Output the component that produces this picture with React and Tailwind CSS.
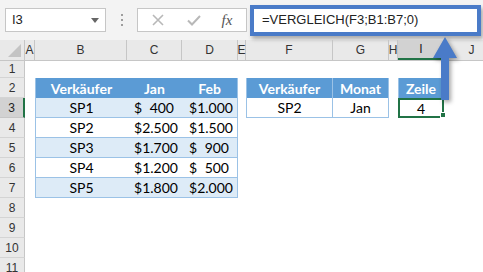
import React from 'react';

const CELL_FONT = { fontFamily: 'Lato, "Liberation Sans", sans-serif' };
const UI_FONT = { fontFamily: '"Liberation Sans", Arial, sans-serif' };

const COLUMNS = [
  { key: 'A', w: 'w-[10px]' },
  { key: 'B', w: 'w-[92px]' },
  { key: 'C', w: 'w-[55px]' },
  { key: 'D', w: 'w-[56px]' },
  { key: 'E', w: 'w-[8px]' },
  { key: 'F', w: 'w-[87px]' },
  { key: 'G', w: 'w-[56px]' },
  { key: 'H', w: 'w-[9px]' },
  { key: 'I', w: 'w-[46px]' },
  { key: 'J', w: 'w-[56px]' },
];

const SALES = [
  { name: 'SP1', jan: '400', feb: '1.000', shade: true },
  { name: 'SP2', jan: '2.500', feb: '1.500', shade: false },
  { name: 'SP3', jan: '1.700', feb: '900', shade: true },
  { name: 'SP4', jan: '1.200', feb: '500', shade: false },
  { name: 'SP5', jan: '1.800', feb: '2.000', shade: true },
];

function Cell({ w, className = '', children }) {
  return <div className={`${w} h-full shrink-0 flex items-center ${className}`}>{children}</div>;
}

function Money({ w, value, className = '' }) {
  return (
    <Cell w={w} className={`justify-between pl-[7px] pr-[8px] ${className}`}>
      <span>$</span>
      <span>{value}</span>
    </Cell>
  );
}

function RowHead({ n, active }) {
  return (
    <div
      className={`w-[25px] h-full shrink-0 flex items-center justify-center border-b text-[12px] ${
        active
          ? 'bg-[#d2d2d2] border-r-2 border-r-[#217346] border-b-[#c6c6c6] text-[#222]'
          : 'bg-[#e9e9e9] border-r border-r-[#c6c6c6] border-b-[#d4d4d4] text-[#333]'
      }`}
      style={UI_FONT}
    >
      {n}
    </div>
  );
}

function SheetRow({ n, h = 'h-[20px]', active, children }) {
  return (
    <div className={`flex ${h}`}>
      <RowHead n={n} active={active} />
      {children}
    </div>
  );
}

function EmptyRow({ n, h }) {
  return <SheetRow n={n} h={h} />;
}

function TopBar() {
  return (
    <div className="h-[40px] flex items-center bg-[#f3f3f3]" style={UI_FONT}>
      <div className="ml-[5px] w-[101px] h-[24px] bg-white border border-[#c6c6c6] flex items-center justify-between pl-[6px] pr-[6px]">
        <span className="text-[13px] text-[#222]">I3</span>
        <svg width="8" height="5" viewBox="0 0 8 5">
          <path d="M0 0 L8 0 L4 5 Z" fill="#666" />
        </svg>
      </div>
      <div className="w-[31px] flex flex-col items-center gap-[3px]">
        <span className="w-[2px] h-[2px] bg-[#9d9d9d]" />
        <span className="w-[2px] h-[2px] bg-[#9d9d9d]" />
        <span className="w-[2px] h-[2px] bg-[#9d9d9d]" />
      </div>
      <div className="w-[110px] h-[24px] bg-white border border-[#c6c6c6] flex items-center">
        <div className="w-[40px] flex justify-center">
          <svg width="12" height="12" viewBox="0 0 12 12">
            <path d="M1 1 L11 11 M11 1 L1 11" stroke="#b8b8b8" strokeWidth="1.6" />
          </svg>
        </div>
        <div className="w-[32px] flex justify-center">
          <svg width="14" height="11" viewBox="0 0 14 11">
            <path d="M1 5.5 L5 9.5 L13 1" stroke="#b8b8b8" strokeWidth="2" fill="none" />
          </svg>
        </div>
        <div className="flex-1 flex justify-center pr-[2px]">
          <span className="italic text-[15px] text-[#555]" style={{ fontFamily: '"Liberation Serif", serif' }}>
            fx
          </span>
        </div>
      </div>
      <div className="ml-[3px] w-[231px] h-[31px] bg-white border-4 border-[#4a7bc8] shadow-[2px_3px_4px_rgba(0,0,0,0.3)] flex items-center pl-[8px]">
        <span className="text-[13px] text-[#222]">=VERGLEICH(F3;B1:B7;0)</span>
      </div>
    </div>
  );
}

function ColumnHeader() {
  return (
    <div className="flex h-[21px] bg-[#e9e9e9] border-b border-[#c6c6c6]" style={UI_FONT}>
      <div className="w-[25px] shrink-0 border-r border-[#c6c6c6] flex items-end justify-end p-[3px]">
        <svg width="13" height="13" viewBox="0 0 13 13">
          <path d="M13 0 L13 13 L0 13 Z" fill="#c4c4c4" />
        </svg>
      </div>
      {COLUMNS.map((c) => (
        <div
          key={c.key}
          className={`${c.w} shrink-0 flex items-center justify-center text-[12px] ${
            c.key === 'I'
              ? 'bg-[#d2d2d2] border-b-2 border-[#217346] text-[#222]'
              : 'border-r border-[#c6c6c6] text-[#333]'
          }`}
        >
          {c.key}
        </div>
      ))}
    </div>
  );
}

function Arrow() {
  return (
    <svg
      className="absolute left-[428px] top-[34px] drop-shadow-[2px_2px_2px_rgba(0,0,0,0.35)]"
      width="34"
      height="72"
      viewBox="0 0 34 72"
    >
      <path d="M17 3 L29 24 L21 24 L21 66 L13 66 L13 24 L5 24 Z" fill="#4a7bc8" />
    </svg>
  );
}

export default function App() {
  return (
    <div className="relative w-[483px] h-[272px] overflow-hidden bg-white">
      <TopBar />
      <ColumnHeader />
      <div style={CELL_FONT} className="text-[14px] text-black">
        <EmptyRow n={1} h="h-[17px]" />
        <SheetRow n={2}>
          <Cell w="w-[10px]" />
          <Cell w="w-[92px]" className="justify-center bg-[#5b9bd5] border-l border-[#9bc2e6] text-white font-bold">
            Verkäufer
          </Cell>
          <Cell w="w-[55px]" className="justify-center bg-[#5b9bd5] text-white font-bold">
            Jan
          </Cell>
          <Cell w="w-[56px]" className="justify-center bg-[#5b9bd5] border-r border-[#9bc2e6] text-white font-bold">
            Feb
          </Cell>
          <Cell w="w-[8px]" />
          <Cell w="w-[87px]" className="justify-center bg-[#5b9bd5] border-l border-r border-[#9bc2e6] text-white font-bold">
            Verkäufer
          </Cell>
          <Cell w="w-[56px]" className="justify-center bg-[#5b9bd5] border-r border-[#9bc2e6] text-white font-bold">
            Monat
          </Cell>
          <Cell w="w-[9px]" />
          <Cell w="w-[46px]" className="justify-center bg-[#5b9bd5] border-l border-r border-[#9bc2e6] text-white font-bold">
            Zeile
          </Cell>
        </SheetRow>
        {SALES.map((s, i) => {
          const bg = s.shade ? 'bg-[#ddebf7]' : 'bg-white';
          const row = i + 3;
          return (
            <SheetRow key={s.name} n={row} active={row === 3}>
              <Cell w="w-[10px]" />
              <Cell w="w-[92px]" className={`justify-center border-l border-b border-[#9bc2e6] ${bg}`}>
                {s.name}
              </Cell>
              <Money w="w-[55px]" value={s.jan} className={`border-b border-[#9bc2e6] ${bg}`} />
              <Money w="w-[56px]" value={s.feb} className={`border-r border-b border-[#9bc2e6] ${bg}`} />
              {row === 3 && (
                <>
                  <Cell w="w-[8px]" />
                  <Cell w="w-[87px]" className="justify-center border-l border-r border-b border-[#9bc2e6]">
                    SP2
                  </Cell>
                  <Cell w="w-[56px]" className="justify-center border-r border-b border-[#9bc2e6]">
                    Jan
                  </Cell>
                  <Cell w="w-[9px]" />
                  <Cell w="w-[46px]" className="relative justify-center border-2 border-[#217346]">
                    4
                    <span className="absolute -right-[4px] -bottom-[2px] w-[6px] h-[6px] bg-[#217346] border border-white" />
                  </Cell>
                </>
              )}
            </SheetRow>
          );
        })}
        <EmptyRow n={8} />
        <EmptyRow n={9} />
        <EmptyRow n={10} />
        <EmptyRow n={11} />
      </div>
      <Arrow />
    </div>
  );
}
